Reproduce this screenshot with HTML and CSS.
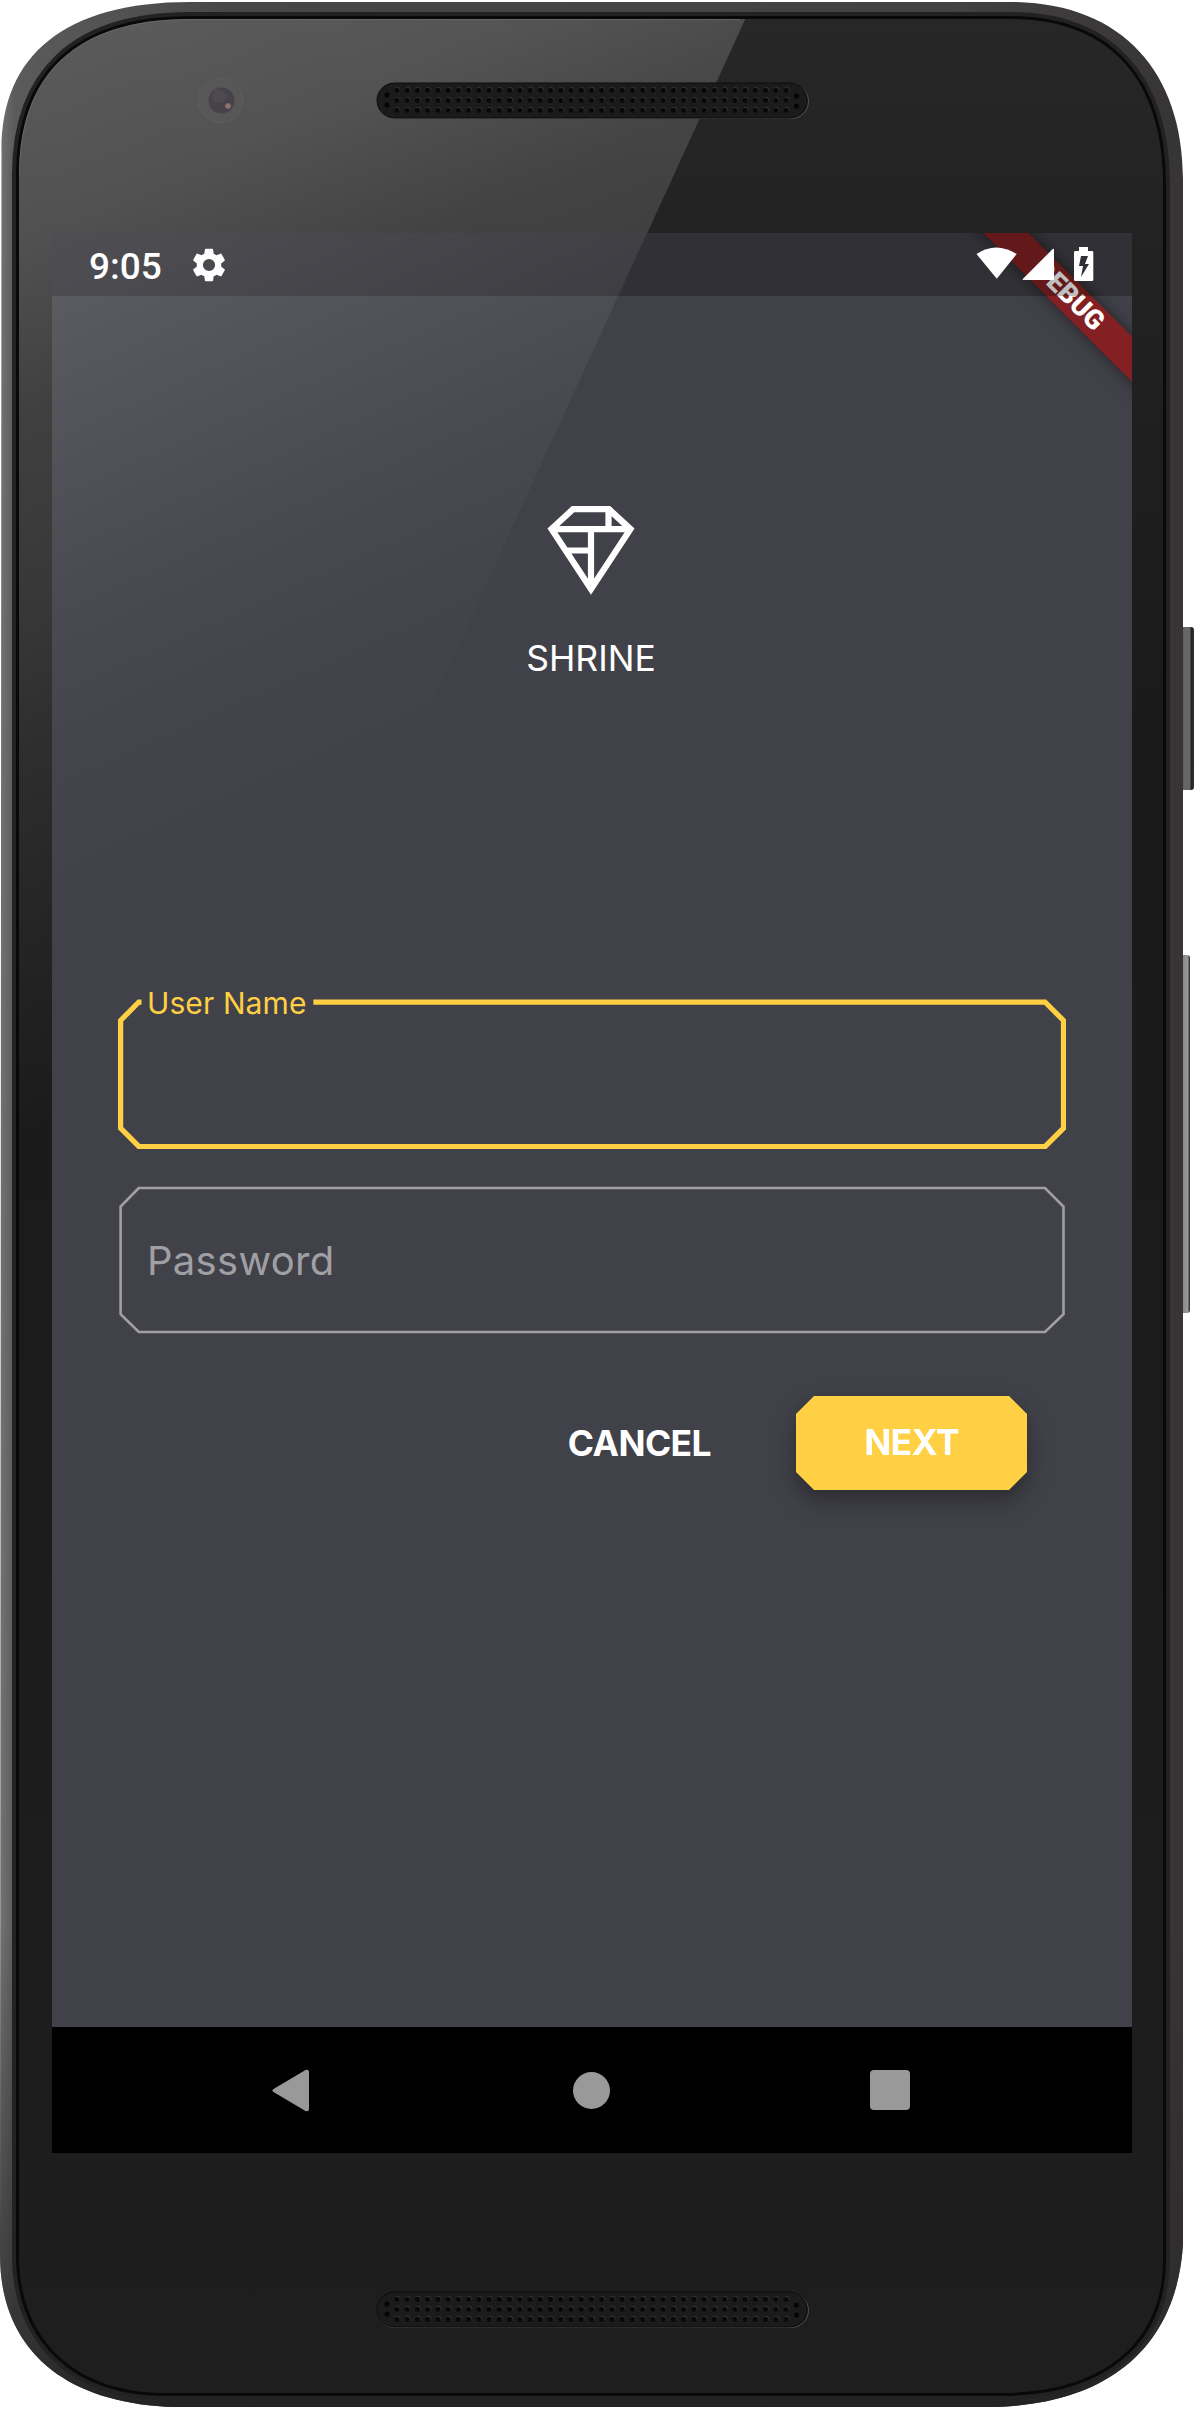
FILE: index.html
```
<!DOCTYPE html>
<html lang="en">
<head>
<meta charset="utf-8">
<title>Shrine</title>
<link rel="stylesheet" href="styles.css">
</head>
<body>
<div class="device">
  <svg class="frame" viewBox="0 0 1194 2409" aria-hidden="true">
    <defs>
      <linearGradient id="rim" x1="0" y1="0" x2="1" y2="0">
        <stop offset="0" stop-color="#747273"/><stop offset=".012" stop-color="#5c5b5c"/><stop offset=".2" stop-color="#484748"/><stop offset=".8" stop-color="#434143"/><stop offset="1" stop-color="#373435"/>
      </linearGradient>
      <linearGradient id="rimShade" x1="0" y1="0" x2="0" y2="1">
        <stop offset=".8" stop-color="#292728" stop-opacity="0"/><stop offset=".97" stop-color="#2b2a2b" stop-opacity=".8"/><stop offset="1" stop-color="#242324"/>
      </linearGradient>
      <linearGradient id="glass" x1="0" y1="0" x2="0" y2="1">
        <stop offset="0" stop-color="#272727"/><stop offset=".1" stop-color="#222"/><stop offset=".3" stop-color="#1a1a1a"/><stop offset=".6" stop-color="#1b1b1b"/><stop offset="1" stop-color="#1e1e1e"/>
      </linearGradient>
      <linearGradient id="shine" gradientUnits="userSpaceOnUse" x1="0" y1="0" x2="430" y2="956">
        <stop offset="0" stop-color="#fff" stop-opacity=".25"/><stop offset=".22" stop-color="#fff" stop-opacity=".21"/><stop offset=".37" stop-color="#fff" stop-opacity=".145"/><stop offset=".54" stop-color="#fff" stop-opacity=".12"/><stop offset=".84" stop-color="#fff" stop-opacity=".04"/><stop offset="1" stop-color="#fff" stop-opacity="0"/>
      </linearGradient>
      <linearGradient id="key" x1="0" y1="0" x2="1" y2="0">
        <stop offset="0" stop-color="#444"/><stop offset=".3" stop-color="#666"/><stop offset=".7" stop-color="#666"/><stop offset=".82" stop-color="#222"/><stop offset="1" stop-color="#333"/>
      </linearGradient>
      <linearGradient id="rocker" x1="0" y1="0" x2="1" y2="0">
        <stop offset="0" stop-color="#555"/><stop offset=".3" stop-color="#888"/><stop offset=".75" stop-color="#999"/><stop offset="1" stop-color="#222"/>
      </linearGradient>
      <pattern id="holes" x="391.88" y="85" width="10.24" height="10" patternUnits="userSpaceOnUse">
        <circle cx="5.6" cy="4.5" r="2.6" fill="#373737"/><circle cx="5.1" cy="5.2" r="2.5" fill="#080808"/>
      </pattern>
      <clipPath id="glassClip"><path d="M19 175C19 75 75 19 190 19H1010C1110 19 1163 80 1163 185V2260C1163 2345 1100 2393 1000 2393H165C75 2393 19 2340 19 2255Z"/></clipPath>
    </defs>
    <rect x="1180" y="627" width="14" height="163" rx="3" fill="url(#key)"/>
    <rect x="1180" y="955" width="10" height="358" rx="3" fill="url(#rocker)"/>
    <path id="shell" d="M1.500 150C1.500 55 65 2 190 2H1010C1120 2 1183 70 1183 180V2245C1176 2350 1105 2407 985 2407H175C65 2404 0 2350 0 2255Z" fill="url(#rim)"/>
    <path d="M1.500 150C1.500 55 65 2 190 2H1010C1120 2 1183 70 1183 180V2245C1176 2350 1105 2407 985 2407H175C65 2404 0 2350 0 2255Z" fill="url(#rimShade)"/>
    <path d="M19 175C19 75 75 19 190 19H1010C1110 19 1163 80 1163 185V2260C1163 2345 1100 2393 1000 2393H165C75 2393 19 2340 19 2255Z" fill="none" stroke="#222" stroke-width="14"/>
    <path d="M19 175C19 75 75 19 190 19H1010C1110 19 1163 80 1163 185V2260C1163 2345 1100 2393 1000 2393H165C75 2393 19 2340 19 2255Z" fill="none" stroke="#090909" stroke-width="6"/>
    <path d="M19 175C19 75 75 19 190 19H1010C1110 19 1163 80 1163 185V2260C1163 2345 1100 2393 1000 2393H165C75 2393 19 2340 19 2255Z" fill="url(#glass)"/>
    <path clip-path="url(#glassClip)" d="M0 0H754L207 1194H0Z" fill="url(#shine)"/>
    <path d="M19.500 175C19.500 75 75 19.500 190 19.500H740" fill="none" stroke="#777" stroke-opacity=".5"/>
    <circle cx="220.500" cy="100.500" r="22" fill="#575757" stroke="#5f5e5e" stroke-width="1"/>
    <circle cx="221.500" cy="100.500" r="13" fill="#464249"/>
    <circle cx="219" cy="96" r="7" fill="#4e4a50"/>
    <circle cx="228" cy="106" r="2.800" fill="#946f70"/>
    <g id="grille">
      <rect x="377.500" y="84.500" width="431" height="34" rx="17" fill="none" stroke="#666" stroke-width="1" stroke-opacity=".65"/>
      <rect x="377" y="83" width="430" height="35" rx="17.500" fill="#1b1b1b" stroke="#0c0c0c"/>
      <rect x="391.880" y="85" width="399.300" height="30" fill="url(#holes)"/>
      <circle cx="387" cy="95" r="2.600" fill="#050505"/><circle cx="387" cy="105" r="2.600" fill="#050505"/>
      <circle cx="796.500" cy="96" r="2.600" fill="#050505"/><circle cx="796.500" cy="106" r="2.600" fill="#050505"/>
    </g>
    <use href="#grille" y="2209"/>
  </svg>

  <main class="screen">
    <header class="status">
      <span class="clock">9:05</span>
      <svg class="gear" viewBox="2 2 20 20"><path fill="#fff" d="M19.140 12.940c.04-.3.06-.61.06-.94s-.02-.64-.07-.94l2.030-1.580c.18-.14.23-.41.12-.61l-1.920-3.320c-.12-.22-.37-.29-.59-.22l-2.390.96c-.5-.38-1.030-.7-1.620-.94L14.400 2.810c-.04-.24-.24-.41-.48-.41h-3.840c-.24 0-.43.17-.47.41L9.250 5.350c-.59.24-1.130.57-1.620.94L5.240 5.330c-.22-.08-.47 0-.59.22L2.740 8.870c-.12.21-.08.47.12.61l2.030 1.580c-.05.3-.09.63-.09.94s.02.64.07.94l-2.030 1.580c-.18.14-.23.41-.12.61l1.920 3.320c.12.22.37.29.59.22l2.390-.96c.5.38 1.030.7 1.620.94l.36 2.540c.05.24.24.41.48.41h3.840c.24 0 .44-.17.47-.41l.36-2.540c.59-.24 1.130-.56 1.620-.94l2.390.96c.22.08.47 0 .59-.22l1.920-3.320c.12-.22.07-.47-.12-.61l-2.010-1.580zM12 15.600a3.600 3.600 0 1 1 0-7.200 3.600 3.600 0 0 1 0 7.200z"/></svg>
      <svg class="signals" viewBox="0 0 118 35">
        <path fill="#fff" d="M.5 7Q20-6 40.700 7L20.800 31.700Z"/>
        <path fill="#fff" d="M78 2.200V33H47.500Q46 33 47 31.700L76.200 2.600Q78 1 78 2.200Z"/>
        <path fill="#fff" fill-rule="evenodd" d="M103 0H112V4H116Q117.300 4 117.300 5.300V33Q117.300 34 116 34H99.500Q98 34 98 33V5.300Q98 4 99.500 4H103ZM105 9 103 19H107L105 30 113 17H109L112 9Z"/>
      </svg>
    </header>

    <section class="login">
      <div class="brand">
        <svg class="gem" viewBox="0 0 88 90">
          <path fill="none" stroke="#fff" stroke-width="6.200" d="M26 3.200H62L83.500 23 44 83 4.500 23ZM4.500 23.200H83.500M61.500 3V23M62 3.500 83 23M44 23V83M18 44.500H44"/>
        </svg>
        <h1 class="name">SHRINE</h1>
      </div>

      <div class="field field-active">
        <svg class="outline" viewBox="0 0 948 150"><path fill="none" stroke="#ffcf44" stroke-width="5.250" d="M23.500 3H20.800L2.600 21.500V129.200L21 147.600H927L945.500 129.200V21.500L927 3H195.400"/></svg>
        <span class="label">User Name</span>
      </div>
      <div class="field">
        <svg class="outline" viewBox="0 0 948 150"><path fill="none" stroke="#a0a0a4" stroke-width="2.600" d="M20.800 3 2.600 21.500V129.200L20.800 147H927L945.500 129.200V21.500L927 3Z"/></svg>
        <span class="placeholder">Password</span>
      </div>

      <div class="actions">
        <span class="cancel">CANCEL</span>
        <span class="next-shadow"><span class="next"><span class="next-text">NEXT</span></span></span>
      </div>
    </section>

    <nav class="navbar">
      <svg class="back" viewBox="0 0 38 43"><path fill="#999" d="M1.500 20 33.500 1Q37 0 37 3V40Q37 43 33.500 42L1.500 23Q-.7 21.500 1.500 20Z"/></svg>
      <span class="home"></span>
      <span class="recents"></span>
    </nav>

    <div class="banner-corner"><span class="banner">DEBUG</span></div>
    <div class="scrim"></div>
    <svg class="gloss" viewBox="52 233 1080 1794" aria-hidden="true">
      <defs><linearGradient id="soft" gradientUnits="userSpaceOnUse" x1="0" y1="0" x2="374" y2="831.600">
        <stop offset=".2" stop-color="#fff" stop-opacity=".15"/><stop offset=".32" stop-color="#fff" stop-opacity=".132"/><stop offset=".476" stop-color="#fff" stop-opacity=".09"/><stop offset=".65" stop-color="#fff" stop-opacity=".043"/><stop offset=".8" stop-color="#fff" stop-opacity=".015"/><stop offset="1" stop-color="#fff" stop-opacity="0"/>
      </linearGradient></defs>
      <path fill="url(#soft)" d="M52 233H647L500 554 278 1040H52Z"/>
    </svg>
  </main>
</div>
</body>
</html>
```
FILE: styles.css
```
body { margin: 0; background: #fff; font-family: Inter, "Liberation Sans", sans-serif; color: #fff; }
.device { position: relative; box-sizing: border-box; width: 1194px; height: 2409px; padding: 233px 62px 0 52px; overflow: hidden; }
.frame { position: absolute; left: 0; top: 0; width: 1194px; height: 2409px; }
.screen { position: relative; display: flex; flex-direction: column; width: 1080px; height: 1920px; background: #414149; overflow: hidden; }

.status { position: relative; z-index: 3; box-sizing: border-box; height: 63px; padding: 0 38px 0 37px; display: flex; align-items: center; }
.clock { font: 500 37px/63px Roboto, sans-serif; width: 76px; white-space: nowrap; padding-top: 3px; }
.gear { width: 34px; height: 34px; margin-left: 27px; }
.signals { width: 118px; height: 35px; margin-left: auto; }
.scrim { position: absolute; z-index: 2; left: 0; top: 0; width: 100%; height: 63px; background: rgba(0, 0, 0, .25); }

.login { flex: 1; padding: 210px 66px 0; display: flex; flex-direction: column; }
.brand { height: 493px; display: flex; flex-direction: column; align-items: center; }
.gem { width: 88px; height: 90px; margin-right: 2px; }
.name { margin: 41px 2px 0 0; font-size: 35.500px; line-height: 44px; font-weight: 400; letter-spacing: 0; }

.field { position: relative; box-sizing: border-box; height: 150px; padding-left: 29px; margin-bottom: 36px; display: flex; align-items: center; }
.field-active { align-items: flex-start; }
.outline { position: absolute; left: 0; top: 0; width: 948px; height: 150px; }
.label { font-size: 30px; line-height: 36px; margin-top: -14px; letter-spacing: .1px; color: #ffcf44; }
.placeholder { font-size: 40px; line-height: 48px; letter-spacing: .3px; padding-top: 2px; color: #a0a0a4; }

.actions { display: flex; justify-content: flex-end; align-items: center; padding: 25px 39px 0 0; gap: 85px; }
.cancel, .next-text { font-size: 35.500px; font-weight: 700; line-height: 93px; letter-spacing: -.6px; white-space: nowrap; }
.next-shadow { filter: drop-shadow(0 11px 12px rgba(0, 0, 0, .26)) drop-shadow(0 4px 6px rgba(0, 0, 0, .12)); }
.next { display: flex; justify-content: center; width: 231px; height: 94px; background: #ffcf44; clip-path: polygon(18px 0, 213px 0, 100% 18px, 100% 76px, 213px 100%, 18px 100%, 0 76px, 0 18px); }

.navbar { height: 126px; background: #000; display: flex; align-items: center; padding-left: 220px; }
.back { width: 38px; height: 43px; }
.home { width: 37px; height: 37px; margin-left: 263px; border-radius: 50%; background: #999; }
.recents { width: 40px; height: 40px; margin-left: 260px; border-radius: 4px; background: #999; }

.banner-corner { position: absolute; z-index: 1; right: 0; top: 0; width: 240px; height: 240px; overflow: hidden; }
.banner { position: absolute; left: 27px; top: 47px; width: 300px; height: 31.500px; transform: rotate(45deg); background: #842023; box-shadow: 0 0 16px rgba(0, 0, 0, .5); text-align: center; font: 900 27px/31.500px Roboto, sans-serif; }
.gloss { position: absolute; z-index: 4; left: 0; top: 0; width: 1080px; height: 1794px; pointer-events: none; }
```
